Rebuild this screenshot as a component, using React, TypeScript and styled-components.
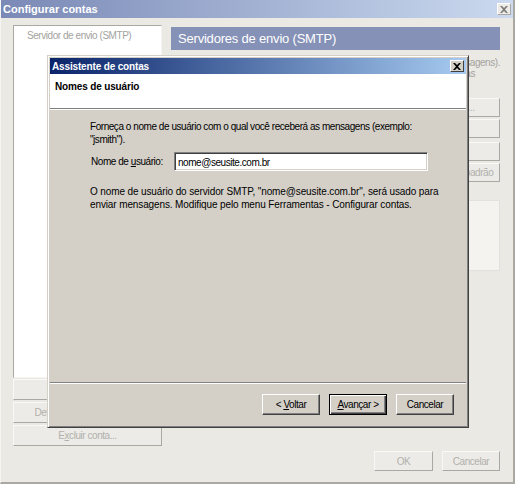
import React from 'react';
import styled, { createGlobalStyle } from 'styled-components';

const GlobalStyle = createGlobalStyle`
  html, body {
    margin: 0;
    padding: 0;
    background: #ebe9e4;
  }
  body {
    font-family: "Liberation Sans", Arial, sans-serif;
    font-size: 10px;
    letter-spacing: -0.45px;
  }
`;

const Window = styled.div`
  position: relative;
  width: 515px;
  height: 484px;
  box-sizing: border-box;
  background: #ebe9e4;
  border-left: 1px solid #f6f5f2;
  border-right: 2px solid #a9a8a3;
  border-bottom: 2px solid #a9a8a3;
  display: flex;
  flex-direction: column;
  overflow: hidden;
`;

const TitleBar = styled.div<{ active?: boolean }>`
  height: ${p => (p.active ? 16 : 18)}px;
  flex: none;
  display: flex;
  align-items: center;
  justify-content: space-between;
  padding: 0 2px 0 2px;
  background: ${p =>
    p.active
      ? 'linear-gradient(to right, #0a246a, #a6caf0)'
      : 'linear-gradient(to right, #7a89b6, #cbdaef)'};
`;

const TitleText = styled.span<{ wide?: boolean }>`
  color: #fff;
  font-weight: bold;
  font-size: ${p => (p.wide ? 11 : 10)}px;
  letter-spacing: ${p => (p.wide ? 0 : -0.15)}px;
  white-space: nowrap;
`;

const CloseBox = styled.div<{ faded?: boolean }>`
  width: 14px;
  height: 12px;
  box-sizing: border-box;
  background: ${p => (p.faded ? '#ecebe7' : '#d4d0c8')};
  border: 1px solid;
  border-color: #fff ${p => (p.faded ? '#a9a8a3' : '#404040')} ${p => (p.faded ? '#a9a8a3' : '#404040')} #fff;
  display: flex;
  align-items: center;
  justify-content: center;
`;

const Body = styled.div`
  flex: 1;
  display: flex;
  flex-direction: column;
  padding: 7px 13px 11px 12px;
`;

const Main = styled.div`
  display: flex;
  gap: 9px;
`;

const LeftCol = styled.div`
  width: 149px;
  flex: none;
  display: flex;
  flex-direction: column;
  gap: 2px;
`;

const ListBox = styled.div<{ h: number }>`
  height: ${p => p.h}px;
  box-sizing: border-box;
  background: #fff;
  border: 1px solid;
  border-color: #a9a8a3 #f4f3f0 #f4f3f0 #a9a8a3;
  margin-bottom: -1px;
`;

const ListItem = styled.div`
  color: #a3a29e;
  padding: 4px 0 0 13px;
  white-space: nowrap;
`;

const FadedButton = styled.div<{ w?: number; h?: number }>`
  height: ${p => p.h ?? 21}px;
  width: ${p => (p.w ? `${p.w}px` : 'auto')};
  box-sizing: border-box;
  background: #ecebe7;
  border: 1px solid;
  border-color: #f8f8f6 #a9a8a3 #a9a8a3 #f8f8f6;
  color: #b1b0ac;
  display: flex;
  align-items: center;
  justify-content: center;
  white-space: nowrap;
`;

const RightCol = styled.div`
  flex: 1;
  display: flex;
  flex-direction: column;
`;

const PanelHeader = styled.div`
  margin-top: 2px;
  height: 23px;
  background: #8591b6;
  color: #fff;
  font-size: 13px;
  letter-spacing: -0.2px;
  display: flex;
  align-items: center;
  padding-left: 7px;
  white-space: nowrap;
`;

const Hint = styled.div`
  margin-top: 7px;
  display: flex;
  flex-direction: column;
  align-items: flex-end;
`;

const HintLine = styled.div<{ pr: number }>`
  color: #a3a29e;
  line-height: 11px;
  padding-right: ${p => p.pr}px;
  white-space: nowrap;
`;

const ServerArea = styled.div`
  margin-top: 19px;
  display: flex;
  gap: 6px;
`;

const ServerList = styled(ListBox)`
  flex: 1;
`;

const ServerButtons = styled.div`
  width: 95px;
  flex: none;
  display: flex;
  flex-direction: column;
  gap: 2px;
`;

const DetailsBox = styled.div`
  margin-top: 15px;
  height: 69px;
  background: #f4f3f0;
  border: 1px solid #e2e1dc;
`;

const BottomRow = styled.div`
  margin-top: auto;
  display: flex;
  justify-content: flex-end;
  gap: 9px;
`;

const Dialog = styled.div`
  position: absolute;
  left: 46px;
  top: 55px;
  width: 422px;
  height: 373px;
  box-sizing: border-box;
  background: #d4d0c8;
  border: 1px solid;
  border-color: #d4d0c8 #404040 #404040 #d4d0c8;
  box-shadow: inset 1px 1px #fff, inset -1px -1px #808080;
  padding: 2px;
  display: flex;
  flex-direction: column;
  color: #000;
`;

const WizardHeader = styled.div`
  height: 35px;
  background: #fff;
  padding: 7px 0 0 5px;
  box-sizing: border-box;
  font-weight: bold;
  letter-spacing: -0.15px;
  border-bottom: 1px solid #808080;
  box-shadow: 0 1px #fff;
`;

const WizardBody = styled.div`
  flex: 1;
  padding: 11px 20px 0 40px;
  display: flex;
  flex-direction: column;
`;

const Para = styled.p<{ loose?: boolean }>`
  margin: 0;
  line-height: 13px;
  white-space: nowrap;
  letter-spacing: ${p => (p.loose ? -0.12 : -0.45)}px;
`;

const FieldRow = styled.div`
  margin: 6px 0 14px;
  display: flex;
  align-items: center;
`;

const FieldLabel = styled.label`
  width: 83px;
  flex: none;
  padding-left: 1px;
  white-space: nowrap;
`;

const TextInput = styled.input`
  width: 254px;
  height: 19px;
  box-sizing: border-box;
  border: 1px solid;
  border-color: #808080 #fff #fff #808080;
  box-shadow: inset 1px 1px #404040, inset -1px -1px #d4d0c8;
  padding: 1px 3px 0;
  font: inherit;
  letter-spacing: inherit;
  background: #fff;
  outline: none;
`;

const WizardFooter = styled.div`
  border-top: 1px solid #808080;
  box-shadow: inset 0 1px #fff;
  height: 43px;
  box-sizing: border-box;
  display: flex;
  justify-content: flex-end;
  align-items: flex-start;
  gap: 9px;
  padding: 11px 12px 0 0;
`;

const WinButton = styled.button<{ primary?: boolean }>`
  width: 58px;
  height: 21px;
  box-sizing: border-box;
  background: #d4d0c8;
  font: inherit;
  letter-spacing: inherit;
  color: #000;
  padding: 0;
  border: 1px solid;
  border-color: ${p => (p.primary ? '#000' : '#fff #404040 #404040 #fff')};
  box-shadow: ${p =>
    p.primary
      ? 'inset 1px 1px #fff, inset -1px -1px #404040, inset -2px -2px #808080'
      : 'inset -1px -1px #808080'};
`;

const Key = styled.span`
  text-decoration: underline;
`;

const XIcon = ({ color }: { color: string }) => (
  <svg width="8" height="7" viewBox="0 0 8 7">
    <path d="M0 0h2l2 2 2-2h2L5 3.5 8 7H6L4 5 2 7H0l3-3.5z" fill={color} />
  </svg>
);

export default function App() {
  return (
    <>
      <GlobalStyle />
      <Window>
        <TitleBar>
          <TitleText wide>Configurar contas</TitleText>
          <CloseBox faded>
            <XIcon color="#7d7c78" />
          </CloseBox>
        </TitleBar>
        <Body>
          <Main>
            <LeftCol>
              <ListBox h={353}>
                <ListItem>Servidor de envio (SMTP)</ListItem>
              </ListBox>
              <FadedButton>Nova conta...</FadedButton>
              <FadedButton>Definir como conta padrão</FadedButton>
              <FadedButton>
                E<Key>x</Key>cluir conta...
              </FadedButton>
            </LeftCol>
            <RightCol>
              <PanelHeader>Servidores de envio (SMTP)</PanelHeader>
              <Hint>
                <HintLine pr={0}>Servidor usado ao enviar mensagens).</HintLine>
                <HintLine pr={25}>Selecione as contas</HintLine>
              </Hint>
              <ServerArea>
                <ServerList h={88} />
                <ServerButtons>
                  <FadedButton h={19}>Adicionar...</FadedButton>
                  <FadedButton h={19}>Editar</FadedButton>
                  <FadedButton h={19} style={{ marginTop: 2 }}>Excluir</FadedButton>
                  <FadedButton h={19}>Definir como padrão</FadedButton>
                </ServerButtons>
              </ServerArea>
              <DetailsBox />
            </RightCol>
          </Main>
          <BottomRow>
            <FadedButton w={59} h={20}>OK</FadedButton>
            <FadedButton w={58} h={20}>Cancelar</FadedButton>
          </BottomRow>
        </Body>

        <Dialog>
          <TitleBar active>
            <TitleText>Assistente de contas</TitleText>
            <CloseBox>
              <XIcon color="#000" />
            </CloseBox>
          </TitleBar>
          <WizardHeader>Nomes de usuário</WizardHeader>
          <WizardBody>
            <Para>
              Forneça o nome de usuário com o qual você receberá as mensagens (exemplo:
              <br />
              "jsmith").
            </Para>
            <FieldRow>
              <FieldLabel>
                Nome de <Key>u</Key>suário:
              </FieldLabel>
              <TextInput defaultValue="nome@seusite.com.br" />
            </FieldRow>
            <Para loose>
              O nome de usuário do servidor SMTP, "nome@seusite.com.br", será usado para
              <br />
              enviar mensagens. Modifique pelo menu Ferramentas - Configurar contas.
            </Para>
          </WizardBody>
          <WizardFooter>
            <WinButton>
              &lt; <Key>V</Key>oltar
            </WinButton>
            <WinButton primary>
              <Key>A</Key>vançar &gt;
            </WinButton>
            <WinButton>Cancelar</WinButton>
          </WizardFooter>
        </Dialog>
      </Window>
    </>
  );
}
